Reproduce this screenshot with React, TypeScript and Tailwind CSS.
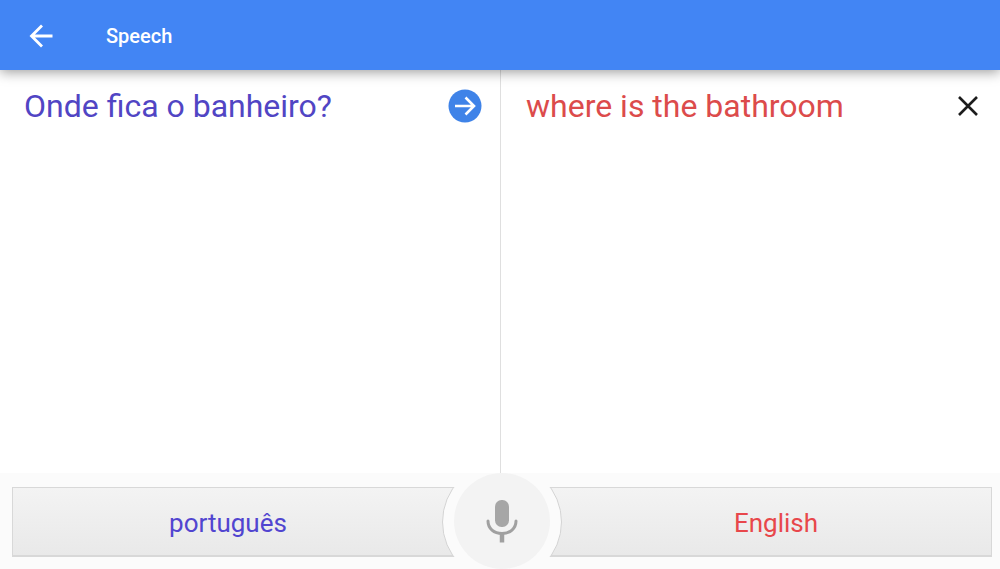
function BackIcon() {
  return (
    <svg viewBox="0 0 24 24" className="h-6 w-6" fill="none" stroke="currentColor" strokeWidth="2.8">
      <path d="M23.5 12H2.500M13 1.500 2.500 12 13 22.500" />
    </svg>
  );
}

function ArrowIcon() {
  return (
    <svg viewBox="0 0 34 34" className="h-[34px] w-[34px]" fill="none">
      <circle cx="17" cy="17" r="16.5" fill="#3f83e8" />
      <path d="M7 17h19M17.500 8.500 26 17l-8.500 8.500" stroke="#fff" strokeWidth="2.6" />
    </svg>
  );
}

function CloseIcon() {
  return (
    <svg viewBox="0 0 20 20" className="h-5 w-5" fill="none" stroke="currentColor" strokeWidth="2.6">
      <path d="M1 1l18 18M19 1 1 19" />
    </svg>
  );
}

function MicIcon() {
  return (
    <svg viewBox="0 0 32 44" className="h-11 w-8" fill="none">
      <rect x="9" y="1" width="14" height="27" rx="6.5" fill="#a6a6a6" />
      <path d="M2 22c0 7.500 6 12.500 14 12.500S30 29.500 30 22" stroke="#a0a0a0" strokeWidth="3" strokeLinecap="round" />
      <path d="M16 34.500V43.500" stroke="#a0a0a0" strokeWidth="4.500" />
    </svg>
  );
}

export default function App() {
  return (
    <div className="flex min-h-screen flex-col bg-white font-[Roboto,sans-serif]">
      <header className="z-10 flex h-[70px] items-center bg-[#4285f4] pt-0.5 pl-[29px] text-white shadow-[0_2px_12px_rgba(0,0,0,0.4)]">
        <button aria-label="Back">
          <BackIcon />
        </button>
        <h1 className="ml-[53px] text-xl font-medium">Speech</h1>
      </header>

      <main className="grid flex-1 grid-cols-2">
        <section className="flex items-start justify-between pt-4 pr-[18px] pl-6">
          <p className="text-[32px] leading-10 text-[#5145c4]">Onde fica o banheiro?</p>
          <button aria-label="Show translation" className="mt-[3px]">
            <ArrowIcon />
          </button>
        </section>
        <section className="flex items-start justify-between border-l border-[#dfdfdf] pt-4 pr-[22px] pl-[25px]">
          <p className="text-[32px] leading-10 text-[#dc4b4b]">where is the bathroom</p>
          <button aria-label="Close" className="mt-[10px] text-[#1c1c1c]">
            <CloseIcon />
          </button>
        </section>
      </main>

      <footer className="relative h-24 overflow-hidden bg-[#fbfbfb] pt-[14px] pr-2 pl-3">
        <div className="relative h-[70px] overflow-hidden">
          <div className="flex h-full border border-b-2 border-[#d8d8d8] bg-linear-to-b from-[#f3f3f3] to-[#e9e9e9] text-[26px]">
            <button className="flex-1 pt-1 text-[#5145d0]">português</button>
            <span className="w-[118px]" />
            <button className="flex-1 pt-1 text-[#e8474b]">English</button>
          </div>
          {/* ring that cuts the bar around the mic */}
          <span className="absolute top-1/2 left-1/2 h-[120px] w-[120px] -translate-1/2 rounded-full border border-[#d4d4d4] bg-[#fbfbfb]" />
        </div>
        <div className="pointer-events-none absolute inset-0 flex items-center justify-center pl-1">
          <button
            aria-label="Speak"
            className="pointer-events-auto flex h-24 w-24 items-center justify-center rounded-full bg-[#f3f3f3]"
          >
            <MicIcon />
          </button>
        </div>
      </footer>
    </div>
  );
}
